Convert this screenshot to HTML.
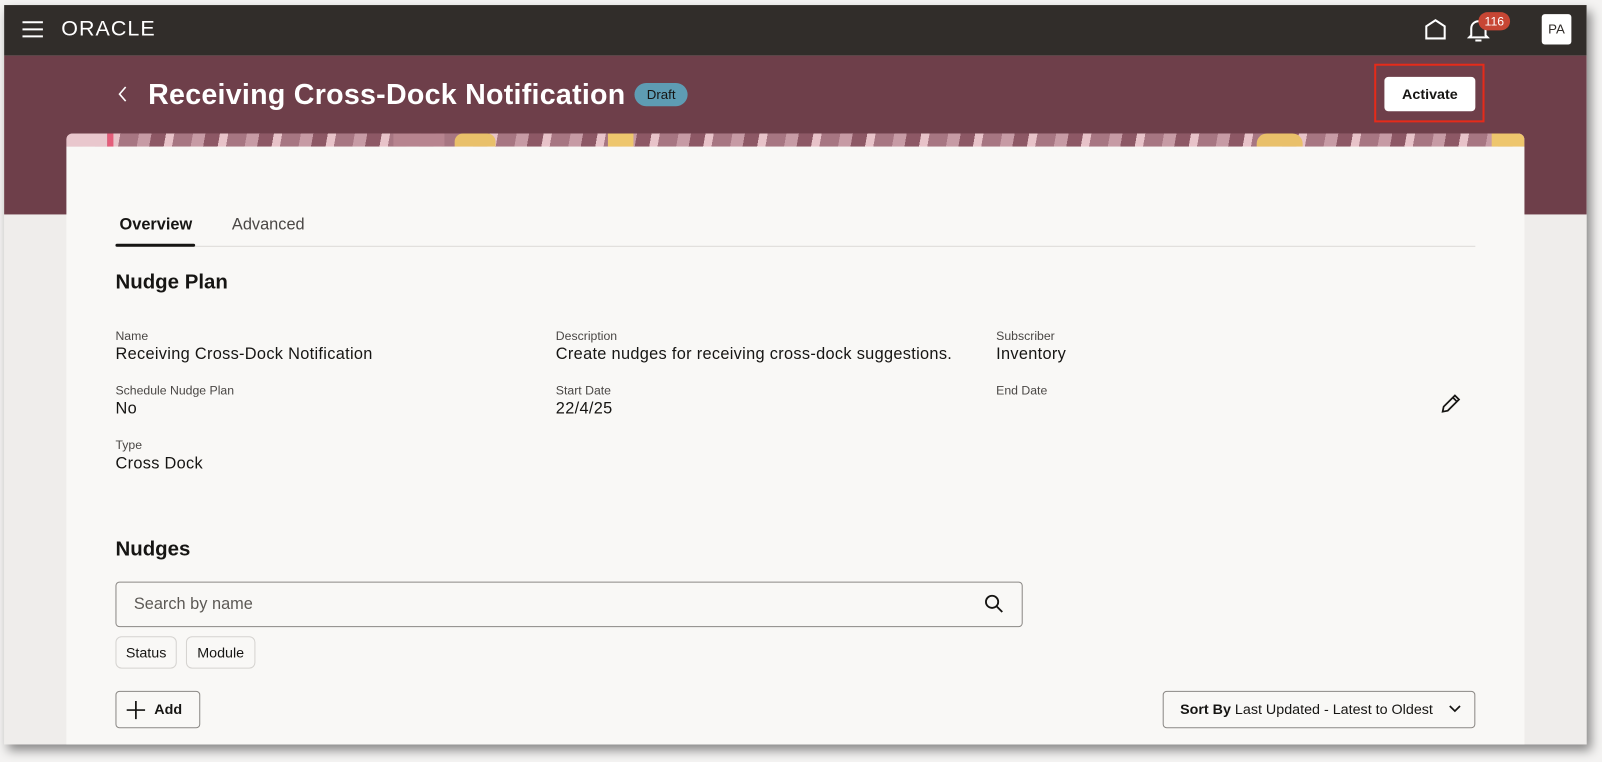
<!DOCTYPE html>
<html><head><meta charset="utf-8"><style>
*{box-sizing:border-box;margin:0;padding:0}
html,body{width:1602px;height:762px;overflow:hidden}
body{background:#f4f3f2;font-family:"Liberation Sans",sans-serif;position:relative;color:#161513}
#wrap{position:absolute;left:0;top:0;width:1568px;height:746px;transform:scale(1.0217,1.0115);transform-origin:0 0}
#app{position:absolute;left:4px;top:5px;width:1549px;height:731px;background:#efedeb;overflow:hidden;box-shadow:4px 6px 10px rgba(0,0,0,.45)}
#hdr{position:absolute;left:0;top:0;width:100%;height:50px;background:#312d2a}
#band{position:absolute;left:0;top:50px;width:100%;height:157px;background:#6e3f4a}
#card{position:absolute;left:61px;top:127px;width:1427px;height:610px;background:#f9f8f6;border-radius:6px 6px 0 0;overflow:hidden}
#strip{position:absolute;left:0;top:0;width:100%;height:13px;background:repeating-linear-gradient(100deg,#a77682 0 18px,#c79ba5 18px 30px,#8d5865 30px 44px,#e8c3c9 44px 52px)}
.t{position:absolute;white-space:nowrap}
.lbl{font-size:12px;color:#4a4745}
.val{font-size:16px;color:#161513;letter-spacing:0.3px}
.btn{position:absolute;border:1px solid #8b8885;border-radius:4px;background:#f9f8f6}
</style></head><body>
<div id="wrap">
<div id="app">
 <div id="hdr">
  <svg style="position:absolute;left:17px;top:15px" width="22" height="18"><path d="M1 2h20M1 9h20M1 16h20" stroke="#fff" stroke-width="2"/></svg>
  <div class="t" style="left:56px;top:12px;color:#fff;font-size:21px;letter-spacing:1px">ORACLE</div>
  <svg style="position:absolute;left:1390px;top:13px" width="22" height="22"><path d="M2 20V8L11 2L20 8V20Z" fill="none" stroke="#fff" stroke-width="2"/></svg>
  <svg style="position:absolute;left:1432px;top:13px" width="22" height="24"><path d="M4 17V10a7 7 0 0 1 14 0v7l2 2H2z" fill="none" stroke="#fff" stroke-width="2"/><path d="M8 22h6" stroke="#fff" stroke-width="2"/></svg>
  <div class="t" style="left:1443px;top:7px;background:#c74634;color:#fff;font-size:12px;padding:2px 6px;border-radius:9px">116</div>
  <div class="t" style="left:1505px;top:9px;width:29px;height:30px;background:#fff;border-radius:3px;font-size:13px;color:#312d2a;text-align:center;line-height:30px">PA</div>
 </div>
 <div id="band">
  <svg style="position:absolute;left:110px;top:29px" width="12" height="18"><path d="M9 2L3 9L9 16" fill="none" stroke="#fff" stroke-width="1.6"/></svg>
  <div class="t" style="left:141px;top:23px;color:#fff;font-size:28px;font-weight:bold;letter-spacing:0.25px">Receiving Cross-Dock Notification</div>
  <div class="t" style="left:617px;top:27px;background:#5e9cb3;color:#161513;font-size:13px;padding:4px 12px;border-radius:12px">Draft</div>
  <div class="t" style="left:1341px;top:8px;width:108px;height:58px;border:2px solid #e52b1a"></div>
  <div class="t" style="left:1351px;top:21px;width:89px;height:34px;background:#fff;border-radius:4px;font-size:14px;font-weight:bold;text-align:center;line-height:34px">Activate</div>
 </div>
 <div id="card">
  <div id="strip"></div>
  <div class="t" style="left:0;top:0;width:40px;height:13px;background:#e9c7cd"></div>
  <div class="t" style="left:40px;top:0;width:6px;height:13px;background:#e45d7a"></div>
  <div class="t" style="left:320px;top:0;width:50px;height:13px;background:#b7848f"></div>
  <div class="t" style="left:380px;top:0;width:40px;height:13px;background:#e9c06a;border-radius:8px 8px 0 0"></div>
  <div class="t" style="left:530px;top:0;width:25px;height:13px;background:#eec66d"></div>
  <div class="t" style="left:1165px;top:0;width:45px;height:13px;background:#e9c06a;border-radius:10px 10px 0 0"></div>
  <div class="t" style="left:1395px;top:0;width:32px;height:13px;background:#eec66d"></div>
  <div style="position:absolute;left:0;top:13px;width:100%;height:600px;background:#f9f8f6"></div>
  <div class="t" style="left:52px;top:82px;font-size:16px;font-weight:bold">Overview</div>
  <div class="t" style="left:162px;top:82px;font-size:16px;color:#4a4745">Advanced</div>
  <div class="t" style="left:48px;top:111px;width:1331px;height:1px;background:#dcdad7"></div>
  <div class="t" style="left:48px;top:109px;width:78px;height:3px;background:#161513;border-radius:2px"></div>
  <div class="t" style="left:48px;top:136px;font-size:20px;font-weight:bold">Nudge Plan</div>

  <div class="t lbl" style="left:48px;top:193px">Name</div>
  <div class="t val" style="left:48px;top:210px">Receiving Cross-Dock Notification</div>
  <div class="t lbl" style="left:479px;top:193px">Description</div>
  <div class="t val" style="left:479px;top:210px">Create nudges for receiving cross-dock suggestions.</div>
  <div class="t lbl" style="left:910px;top:193px">Subscriber</div>
  <div class="t val" style="left:910px;top:210px">Inventory</div>

  <div class="t lbl" style="left:48px;top:247px">Schedule Nudge Plan</div>
  <div class="t val" style="left:48px;top:264px">No</div>
  <div class="t lbl" style="left:479px;top:247px">Start Date</div>
  <div class="t val" style="left:479px;top:264px">22/4/25</div>
  <div class="t lbl" style="left:910px;top:247px">End Date</div>
  <svg style="position:absolute;left:1344px;top:256px" width="22" height="22"><path d="M3 19L4 14L15 3L19 7L8 18Z M13 5L17 9" fill="none" stroke="#161513" stroke-width="1.7"/></svg>

  <div class="t lbl" style="left:48px;top:301px">Type</div>
  <div class="t val" style="left:48px;top:318px">Cross Dock</div>

  <div class="t" style="left:48px;top:400px;font-size:20px;font-weight:bold">Nudges</div>
  <div class="btn" style="left:48px;top:443px;width:888px;height:45px"></div>
  <div class="t" style="left:66px;top:457px;font-size:16px;color:#5c5955">Search by name</div>
  <svg style="position:absolute;left:898px;top:455px" width="20" height="20"><circle cx="8" cy="8" r="6" fill="none" stroke="#161513" stroke-width="1.8"/><path d="M12.5 12.5L18 18" stroke="#161513" stroke-width="1.8"/></svg>
  <div class="t" style="left:48px;top:497px;width:60px;height:32px;border:1px solid #d5d3d0;border-radius:6px;font-size:14px;text-align:center;line-height:30px">Status</div>
  <div class="t" style="left:117px;top:497px;width:68px;height:32px;border:1px solid #d5d3d0;border-radius:6px;font-size:14px;text-align:center;line-height:30px">Module</div>
  <div class="btn" style="left:48px;top:551px;width:83px;height:37px"></div>
  <svg style="position:absolute;left:58px;top:560px" width="20" height="20"><path d="M10 1V19M1 10H19" stroke="#161513" stroke-width="1.7"/></svg>
  <div class="t" style="left:86px;top:561px;font-size:14px;font-weight:bold">Add</div>
  <div class="btn" style="left:1073px;top:551px;width:306px;height:37px"></div>
  <div class="t" style="left:1090px;top:561px;font-size:14px"><b>Sort By</b> Last Updated - Latest to Oldest</div>
  <svg style="position:absolute;left:1352px;top:563px" width="14" height="12"><path d="M2 3L7 8L12 3" fill="none" stroke="#161513" stroke-width="1.7"/></svg>
 </div>
</div>
</div>
</body></html>
